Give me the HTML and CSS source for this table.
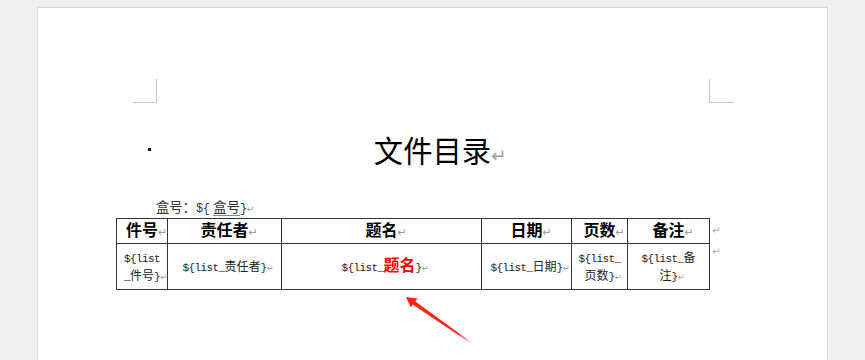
FILE: index.html
```html
<!DOCTYPE html>
<html lang="zh-CN">
<head>
<meta charset="utf-8">
<title>文件目录</title>
<link rel="stylesheet" href="styles.css">
</head>
<body>
<div class="page">
  <div class="marks"><span class="mark mark-l"></span><span class="mark mark-r"></span></div>
  <div class="title-row"><span class="bullet"></span><h1 class="title">文件目录<span class="pm">↵</span></h1></div>
  <p class="box-no">盒号：<span class="lt lt-b">${</span><span class="spell">盒号</span><span class="lt lt-b">}</span><span class="pm">↵</span></p>
  <table class="catalog">
    <tr class="head">
      <th class="c1 first">件号<span class="pm">↵</span></th>
      <th class="c2">责任者<span class="pm">↵</span></th>
      <th class="c3">题名<span class="pm">↵</span></th>
      <th class="c4">日期<span class="pm">↵</span></th>
      <th class="c5">页数<span class="pm">↵</span></th>
      <th class="c6">备注<span class="pm">↵</span></th>
      <td class="eol">↵</td>
    </tr>
    <tr class="body">
      <td class="cell first"><span class="lt">${list</span><br><span class="lt">_</span>件号<span class="lt">}</span><span class="pm">↵</span></td>
      <td class="cell"><span class="lt">${list_</span>责任者<span class="lt">}</span><span class="pm">↵</span></td>
      <td class="cell"><span class="lt">${list_</span><span class="hl">题名</span><span class="lt">}</span><span class="pm">↵</span></td>
      <td class="cell"><span class="lt">${list_</span>日期<span class="lt">}</span><span class="pm">↵</span></td>
      <td class="cell"><span class="lt">${list_</span><br>页数<span class="lt">}</span><span class="pm">↵</span></td>
      <td class="cell"><span class="lt">${list_</span>备<br>注<span class="lt">}</span><span class="pm">↵</span></td>
      <td class="eol eol-top">↵</td>
    </tr>
  </table>
</div>
<svg class="arrow" width="865" height="360" viewBox="0 0 865 360" aria-hidden="true">
  <defs>
    <linearGradient id="fade" gradientUnits="userSpaceOnUse" x1="406" y1="297" x2="470" y2="342">
      <stop offset="0" stop-color="#ff2417"/>
      <stop offset="0.8" stop-color="#ff2417"/>
      <stop offset="1" stop-color="#ff2417" stop-opacity="0.25"/>
    </linearGradient>
  </defs>
  <polygon fill="url(#fade)" points="406,297 417.5,298.6 415.4,301.6 470.4,341.6 469.6,342.4 412.6,304.6 410.8,307.6"/>
</svg>
</body>
</html>
```

FILE: styles.css
```css
html {
  overflow: hidden;
}

body {
  margin: 0;
  padding: 7px 0 0 37px;
  width: 828px;
  height: 353px;
  background: #f0f0f0;
  position: relative;
  font-family: "Noto Sans CJK SC", sans-serif;
  color: #000;
}

.page {
  width: 553px;
  height: 352px;
  padding: 0 118px;
  background: #fff;
  border: 1px solid #d6d6d6;
  border-bottom: none;
}

.marks {
  display: flex;
  justify-content: space-between;
  margin: 71px -24px 0 -23px;
}

.mark {
  width: 23px;
  height: 23px;
  border-bottom: 1px solid #c4c4c4;
}

.mark-l {
  border-right: 1px solid #c4c4c4;
}

.mark-r {
  border-left: 1px solid #c4c4c4;
}

.title-row {
  display: flex;
  margin: 26px 0 0 -8px;
  height: 40px;
}

.bullet {
  flex: none;
  width: 3px;
  height: 3px;
  margin-top: 19px;
  background: #111;
}

.title {
  flex: 1;
  margin: 0;
  padding-left: 5px;
  text-align: center;
  font-size: 29.33px;
  font-weight: 400;
  line-height: 40px;
  color: #000;
}

.pm {
  display: inline-block;
  width: 0;
  white-space: nowrap;
  color: #9c9c9c;
  font-family: "DejaVu Sans", sans-serif;
  font-weight: 400;
  font-size: 0.7em;
}

.title .pm {
  font-size: 0.62em;
}

.box-no {
  margin: 29px 0 0;
  font-size: 13.33px;
  line-height: 18px;
  color: #333;
}

.spell {
  text-decoration: underline;
  text-decoration-color: #5b8ee6;
  text-underline-offset: 3px;
  margin-left: 4px;
}

.lt {
  font-family: "Liberation Mono", monospace;
  font-size: 11px;
  letter-spacing: -0.6px;
}

.lt-b {
  font-size: 12px;
  letter-spacing: -0.53px;
}

.catalog {
  margin-left: -40px;
  border-collapse: separate;
  border-spacing: 0;
  table-layout: fixed;
  width: 614px;
}

.catalog th,
.catalog .cell {
  box-sizing: border-box;
  padding: 0;
  text-align: center;
  vertical-align: middle;
  border-right: 1px solid #333;
  border-bottom: 1px solid #333;
  white-space: nowrap;
}

.catalog th {
  border-top: 1px solid #333;
  font-size: 16px;
  font-weight: 700;
  line-height: 20px;
  color: #000;
}

.catalog .first {
  border-left: 1px solid #333;
}

.c1 { width: 52px; }
.c2 { width: 114px; }
.c3 { width: 200px; }
.c4 { width: 90px; }
.c5 { width: 56px; }
.c6 { width: 82px; }

.head {
  height: 24px;
}

.body {
  height: 46px;
}

.catalog .cell {
  font-size: 12px;
  line-height: 15px;
  color: #222;
}

.hl {
  color: #ff0000;
  font-weight: 700;
  font-size: 16px;
}

.eol {
  padding: 0 0 0 2px;
  text-align: left;
  vertical-align: middle;
  color: #a6a6a6;
  font-family: "DejaVu Sans", sans-serif;
  font-size: 10px;
  line-height: 12px;
}

.eol-top {
  vertical-align: top;
  padding-top: 2px;
}

.arrow {
  position: absolute;
  left: 0;
  top: 0;
  pointer-events: none;
}
```
